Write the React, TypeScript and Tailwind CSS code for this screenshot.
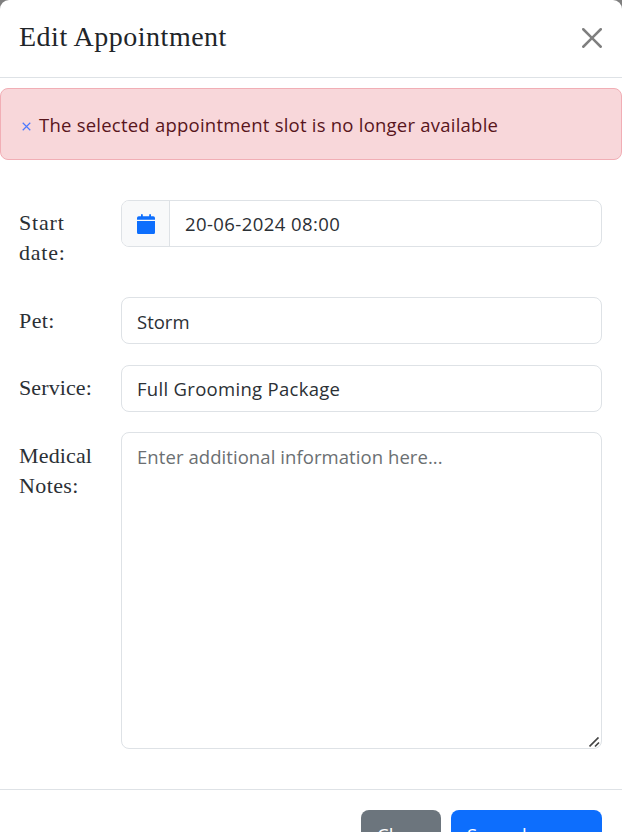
import type { ReactNode } from "react";

const sans = "font-['Open_Sans','Noto_Sans',sans-serif]";
const serif = "font-['Liberation_Serif',serif]";

function Row({ label, className, children }: { label: ReactNode; className: string; children: ReactNode }) {
  return (
    <div className={`flex items-start ${className}`}>
      <label className={`w-[102px] shrink-0 text-[22px] leading-[30px] text-[#2b3035] ${serif}`}>{label}</label>
      {children}
    </div>
  );
}

export default function App() {
  return (
    <div className={`h-[832px] w-[622px] overflow-hidden bg-[#7f7f7f] text-[18.5px] text-[#2b3035] ${sans}`}>
      <div className="flex h-[900px] flex-col rounded-t-[9px] bg-white">
        <header className="flex h-[78px] shrink-0 items-center justify-between border-b border-[#dee2e6] pr-5 pb-[2px] pl-[19px]">
          <h5 className={`text-[28px] leading-[38px] tracking-[0.5px] text-[#212529] ${serif}`}>
            <span className="relative -top-px">Edit Appointment</span>
          </h5>
          <button aria-label="Dismiss" className="text-[#7f7f7f]">
            <svg width="20" height="20" viewBox="0 0 16 16" fill="currentColor">
              <path d="M.293.293a1 1 0 0 1 1.414 0L8 6.586 14.293.293a1 1 0 1 1 1.414 1.414L9.414 8l6.293 6.293a1 1 0 0 1-1.414 1.414L8 9.414l-6.293 6.293a1 1 0 0 1-1.414-1.414L6.586 8 .293 1.707a1 1 0 0 1 0-1.414z" />
            </svg>
          </button>
        </header>
        <div role="alert" className="mt-[10px] flex h-[72px] shrink-0 items-center rounded-[8px] border border-[#f1aeb5] bg-[#f8d7da] pl-[21px] text-[#58151c]">
          <svg className="mt-[5px] mr-2 text-[#4d79ff]" width="9" height="9" viewBox="0 0 10 10" fill="none" stroke="currentColor" strokeWidth="1.3">
            <path d="M.8.8l8.4 8.4M9.2.8L.8 9.2" />
          </svg>
          <span className="pt-[2px] leading-[30px] tracking-[0.23px]">The selected appointment slot is no longer available</span>
        </div>
        <form className="pt-10 pr-5 pl-[19px]">
          <Row className="h-[97px]" label={<span className="block pt-2 tracking-[0.8px]">Start<br />date:</span>}>
            <div className="flex h-[47px] flex-1 overflow-hidden rounded-[8px] border border-[#dee2e6]">
              <span className="flex w-[48px] shrink-0 items-center justify-center border-r border-[#dee2e6] bg-[#f8f9fa] text-[#0d6efd]">
                <svg width="18" height="20" viewBox="0 0 18 20" fill="currentColor">
                  <path d="M4 1a.8.8 0 0 1 1.8 0v1.3h6.4V1A.8.8 0 0 1 14 1v1.3h2.2A1.8 1.8 0 0 1 18 4.1v1.6H0V4.1a1.8 1.8 0 0 1 1.8-1.8H4zM0 7h18v11.5a1.5 1.5 0 0 1-1.5 1.5h-15A1.5 1.5 0 0 1 0 18.500z" />
                </svg>
              </span>
              <span className="pt-[8px] pl-[15px] leading-[30px] tracking-[0.42px]">20-06-2024 08:00</span>
            </div>
          </Row>
          <Row className="h-[68px]" label={<span className="block pt-[9px] tracking-[0.4px]">Pet:</span>}>
            <div className="h-[47px] flex-1 rounded-[8px] border border-[#dee2e6] pt-[9px] pl-[15px] leading-[30px]"><span>Storm</span></div>
          </Row>
          <Row className="h-[67px]" label={<span className="block pt-2 tracking-[0.1px]">Service:</span>}>
            <div className="h-[47px] flex-1 rounded-[8px] border border-[#dee2e6] pt-[8px] pl-[15px] leading-[30px] tracking-[0.3px]"><span>Full Grooming Package</span></div>
          </Row>
          <Row className="h-[317px]" label={<span className="block pt-[9px] tracking-[0.15px]">Medical<br /><span className="tracking-[0.4px]">Notes:</span></span>}>
            <div className="flex h-[317px] flex-1 justify-between rounded-[8px] border border-[#dee2e6] pt-[9px] pl-[15px] leading-[30px] tracking-[0.07px] text-[#6b6f72]">
              <span>Enter additional information here...</span>
              <svg className="self-end text-[#444]" width="12" height="11" viewBox="0 0 12 11" fill="none" stroke="currentColor" strokeWidth="1.7">
                <path d="M.5 9.500l9-9M6 9.500l4-4" />
              </svg>
            </div>
          </Row>
        </form>
        <footer className="mt-10 flex justify-end gap-[10px] border-t border-[#dee2e6] pt-5 pr-5 leading-[30px] text-white">
          <button className="h-[48px] w-[80px] rounded-[8px] bg-[#6c757d] pt-[2px] pl-4 text-left tracking-[0.2px]">Close</button>
          <button className="h-[48px] w-[151px] rounded-[8px] bg-[#0d6efd] pt-[2px] pl-4 text-left tracking-[0.2px]">Save changes</button>
        </footer>
      </div>
    </div>
  );
}
